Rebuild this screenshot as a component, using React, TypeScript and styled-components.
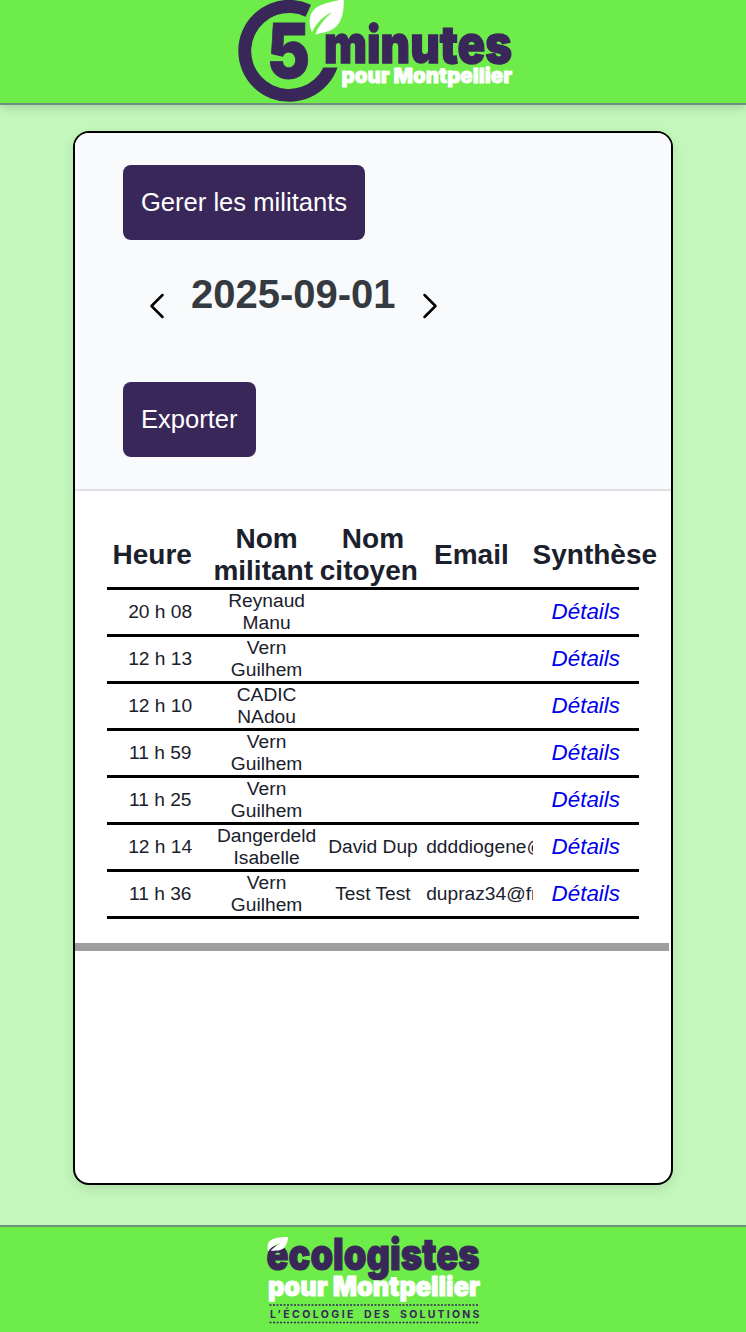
import React from "react";
import styled, { createGlobalStyle } from "styled-components";

const GlobalStyle = createGlobalStyle`
  *, *::before, *::after { box-sizing: border-box; }
  html, body { margin: 0; padding: 0; }
  body {
    background: #c4f7bc;
    font-family: "Liberation Sans", Arial, sans-serif;
    color: #1a202c;
  }
`;

const Page = styled.div`
  display: flex;
  flex-direction: column;
  height: 1332px;
  overflow: hidden;
`;

const Header = styled.header`
  display: flex;
  justify-content: center;
  flex: none;
  height: 105px;
  background: #6eec49;
  border-bottom: 2px solid #71917f;
  box-shadow: 0 2px 10px rgba(0, 0, 0, 0.18);
`;

const Footer = styled.footer`
  display: flex;
  justify-content: center;
  flex: none;
  height: 107px;
  background: #6eec49;
  border-top: 2px solid #71917f;
`;

const Main = styled.main`
  display: flex;
  justify-content: center;
  flex: 1;
  padding: 26px 0 40px;
`;

const Card = styled.section`
  width: 600px;
  overflow: hidden;
  background: #fff;
  border: 2px solid #000;
  border-radius: 16px;
  box-shadow: 0 4px 12px rgba(0, 0, 0, 0.1);
`;

const Toolbar = styled.div`
  display: flex;
  flex-direction: column;
  align-items: flex-start;
  height: 358px;
  padding: 32px 48px;
  background: #f8fafc;
  border-bottom: 2px solid #dee2e6;
`;

const Button = styled.button`
  height: 75px;
  padding: 0 17.9px;
  border: 0;
  border-radius: 8px;
  background: #3a2759;
  color: #fff;
  font: 25.6px "Liberation Sans", Arial, sans-serif;
`;

const DateNav = styled.div`
  display: flex;
  flex: 1;
  align-items: flex-start;
  padding: 31px 0 0 26px;
`;

const DateTitle = styled.h1`
  margin: 0 26px 0 26px;
  color: #343a40;
  font-size: 40px;
  line-height: 46px;
  font-weight: 700;
`;

const Arrow = styled.svg`
  width: 16px;
  height: 26px;
  margin-top: 22px;
  fill: none;
  stroke: #000;
  stroke-width: 2.5;
  stroke-linecap: round;
  stroke-linejoin: round;
`;

const TableArea = styled.div`
  padding: 32px 32px 24px;
`;

const Table = styled.table`
  width: 532px;
  table-layout: fixed;
  border-collapse: separate;
  border-spacing: 0;
  text-align: center;
`;

const HeadCell = styled.th`
  height: 67px;
  padding: 0;
  border-bottom: 3px solid #000;
  font-size: 28px;
  line-height: 32px;
`;

const SortSlot = styled.span`
  margin-right: 16px;
`;

const Cell = styled.td<{ $clip?: boolean }>`
  height: 47px;
  padding: 0;
  border-bottom: 3px solid #000;
  font-size: 19.2px;
  line-height: 22px;
  overflow: ${(p) => (p.$clip ? "hidden" : "visible")};
  white-space: ${(p) => (p.$clip ? "nowrap" : "normal")};
`;

const DetailLink = styled.a`
  display: block;
  padding-bottom: 1px;
  color: #0000ee;
  font-size: 22.4px;
  font-style: italic;
`;

const Scrollbar = styled.div`
  width: 594px;
  height: 8px;
  background: #9e9e9e;
`;

const Logo = styled.svg`
  display: block;
  flex: none;
  overflow: visible;
  font-family: Inter, sans-serif;
  font-weight: 900;
`;

const HeaderLogo = () => (
  <Logo width="280" height="103" viewBox="233 0 280 103">
    <path
      fill="#3a2759"
      d="M311 4.7A51 51 0 1 0 337.5 67.5H323.4A38 38 0 1 1 305.6 16.7Z"
    />
    <path
      fill="#fff"
      transform="translate(226 0) scale(.33333)"
      d="M353 -4C320 8 272 8 256 40C248 58 250 78 258 97C268 75 290 48 318 37C296 56 276 80 268 104C290 96 325 98 343 62C353 42 354 15 353 -4Z"
    />
    <g fill="#3a2759" stroke="#3a2759">
      <text x="267" y="78" fontSize="76" strokeWidth="0.8" textLength="43" lengthAdjust="spacingAndGlyphs">5</text>
      <text x="324" y="62.5" fontSize="52" strokeWidth="1.4" textLength="188" lengthAdjust="spacingAndGlyphs">minutes</text>
    </g>
    <text x="341.500" y="83" fontSize="20.6" fill="#fff" stroke="#fff" strokeWidth="0.8" textLength="170.500" lengthAdjust="spacingAndGlyphs">pour Montpellier</text>
  </Logo>
);

const FooterLogo = () => (
  <Logo width="220" height="105" viewBox="263 1227 220 105">
    <text x="266.500" y="1270" fontSize="43.500" fill="#3a2759" stroke="#3a2759" strokeWidth="1.2" textLength="213" lengthAdjust="spacingAndGlyphs">ecologistes</text>
    <path
      fill="#fff"
      transform="translate(250 1215) scale(.33333)"
      d="M115 66C95 67 67 66 56 82C52 90 52 99 54 108C62 97 76 88 92 84C81 91 69 99 62 108C76 106 95 109 104 96C112 86 113 76 115 66Z"
    />
    <text x="268" y="1295.7" fontSize="26.500" fill="#fff" stroke="#fff" strokeWidth="0.9" textLength="212" lengthAdjust="spacingAndGlyphs">pour Montpellier</text>
    <g stroke="#3a2759" strokeWidth="1.3" strokeDasharray="2 1.5">
      <path d="M269.500 1305H479.500" />
      <path d="M269.500 1322.500H479.500" />
    </g>
    <g fontSize="10.500" fontWeight="700" fill="#3a2759">
      <text x="270" y="1317.6" textLength="83.500">L’ÉCOLOGIE</text>
      <text x="364" y="1317.6" textLength="25.500">DES</text>
      <text x="400" y="1317.6" textLength="79.500">SOLUTIONS</text>
    </g>
  </Logo>
);

const COLUMNS = [
  ["Heure"],
  ["Nom", "militant"],
  ["Nom", "citoyen"],
  ["Email"],
  ["Synthèse"],
];

const ROWS = [
  { time: "20 h 08", last: "Reynaud", first: "Manu", citizen: "", email: "" },
  { time: "12 h 13", last: "Vern", first: "Guilhem", citizen: "", email: "" },
  { time: "12 h 10", last: "CADIC", first: "NAdou", citizen: "", email: "" },
  { time: "11 h 59", last: "Vern", first: "Guilhem", citizen: "", email: "" },
  { time: "11 h 25", last: "Vern", first: "Guilhem", citizen: "", email: "" },
  { time: "12 h 14", last: "Dangerdeld", first: "Isabelle", citizen: "David Dup", email: "ddddiogene@" },
  { time: "11 h 36", last: "Vern", first: "Guilhem", citizen: "Test Test", email: "dupraz34@fr" },
];

export default function App() {
  return (
    <>
      <GlobalStyle />
      <Page>
        <Header>
          <HeaderLogo />
        </Header>
        <Main>
          <Card>
            <Toolbar>
              <Button>Gerer les militants</Button>
              <DateNav>
                <Arrow viewBox="0 0 16 26">
                  <path d="M13.500 2L2.500 13L13.500 24" />
                </Arrow>
                <DateTitle>2025-09-01</DateTitle>
                <Arrow viewBox="0 0 16 26">
                  <path d="M2.500 2L13.500 13L2.500 24" />
                </Arrow>
              </DateNav>
              <Button>Exporter</Button>
            </Toolbar>
            <TableArea>
              <Table>
                <thead>
                  <tr>
                    {COLUMNS.map((words) => (
                      <HeadCell key={words.join(" ")}>
                        {words.length > 1 && (
                          <>
                            {words[0]}
                            <br />
                          </>
                        )}
                        <SortSlot>{words[words.length - 1]}</SortSlot>
                      </HeadCell>
                    ))}
                  </tr>
                </thead>
                <tbody>
                  {ROWS.map((r) => (
                    <tr key={r.time}>
                      <Cell>{r.time}</Cell>
                      <Cell>
                        {r.last}
                        <br />
                        {r.first}
                      </Cell>
                      <Cell>{r.citizen}</Cell>
                      <Cell $clip>{r.email}</Cell>
                      <Cell>
                        <DetailLink>Détails</DetailLink>
                      </Cell>
                    </tr>
                  ))}
                </tbody>
              </Table>
            </TableArea>
            <Scrollbar />
          </Card>
        </Main>
        <Footer>
          <FooterLogo />
        </Footer>
      </Page>
    </>
  );
}
